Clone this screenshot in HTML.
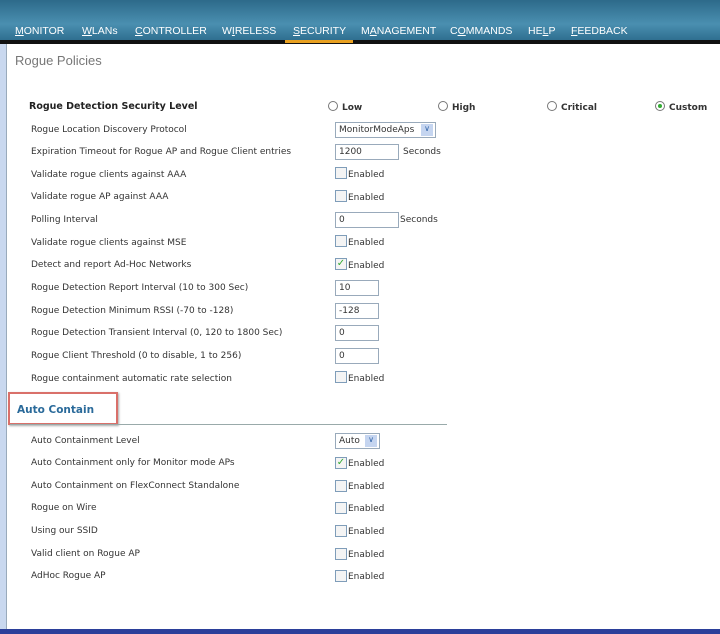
<!DOCTYPE html>
<html><head><meta charset="utf-8"><style>
*{margin:0;padding:0;box-sizing:border-box}
body{width:720px;height:634px;background:#fff;position:relative;overflow:hidden;font-family:"DejaVu Sans","Liberation Sans",sans-serif;font-size:9px;color:#333}
.nav{position:absolute;left:0;top:0;width:720px;height:40px;background:linear-gradient(#2d6a8a,#4a8fb0 60%,#2f6f90)}
.nav span{position:absolute;top:25px;color:#fff;font-family:"Liberation Sans",sans-serif;font-size:10.5px}
.nav u{text-decoration:underline}
.blk{position:absolute;left:0;top:40px;width:720px;height:4px;background:#111}
.sel{position:absolute;left:285px;top:40px;width:68px;height:3px;background:#e8a020}
.sb{position:absolute;left:0;top:44px;width:7px;height:585px;background:#c9d8ef;border-right:1px solid #9ab}
.bot{position:absolute;left:0;top:629px;width:720px;height:5px;background:#2b3f9a}
.t{position:absolute;white-space:nowrap}
.l{left:31px}
.cb{position:absolute;width:12px;height:12px;border:1px solid #7f9db9;background:#f4f4f4;left:335px}
.in{position:absolute;left:335px;height:16px;border:1px solid #9ab;background:#fff;padding:2px 3px;font-size:9px}
.rad{display:inline-block;width:10px;height:10px;border:1px solid #777;border-radius:50%;vertical-align:-1px;margin-right:4px;background:#fff;position:relative}
</style></head><body>
<div class="nav">
<span style="left:15px"><u>M</u>ONITOR</span>
<span style="left:82px"><u>W</u>LANs</span>
<span style="left:135px"><u>C</u>ONTROLLER</span>
<span style="left:222px">W<u>I</u>RELESS</span>
<span style="left:293px"><u>S</u>ECURITY</span>
<span style="left:361px">M<u>A</u>NAGEMENT</span>
<span style="left:450px">C<u>O</u>MMANDS</span>
<span style="left:528px">HE<u>L</u>P</span>
<span style="left:571px"><u>F</u>EEDBACK</span>
</div>
<div class="blk"></div><div class="sel"></div>
<div class="sb"></div>
<div class="t" style="left:15px;top:53px;font-family:'Liberation Sans',sans-serif;font-size:13px;color:#777">Rogue Policies</div>
<div class="t" style="left:29px;top:101px;font-weight:bold;font-size:9.5px;color:#222">Rogue Detection Security Level</div>
<div class="t" style="left:328px;top:101px;font-weight:bold"><span class="rad"></span>Low</div>
<div class="t" style="left:438px;top:101px;font-weight:bold"><span class="rad"></span>High</div>
<div class="t" style="left:547px;top:101px;font-weight:bold"><span class="rad"></span>Critical</div>
<div class="t" style="left:655px;top:101px;font-weight:bold"><span class="rad"><span style="position:absolute;left:2px;top:2px;width:4px;height:4px;border-radius:50%;background:#3a3"></span></span>Custom</div>

<div class="t l" style="top:125px">Rogue Location Discovery Protocol</div>
<div class="in" style="top:122px;width:101px">MonitorModeAps <span style="position:absolute;right:2px;top:1px;width:12px;height:12px;background:#c5d5f0;color:#36a;font-size:8px;text-align:center">&#8744;</span></div>
<div class="t l" style="top:147px">Expiration Timeout for Rogue AP and Rogue Client entries</div>
<div class="in" style="top:144px;width:64px">1200</div><div class="t" style="left:403px;top:147px">Seconds</div>
<div class="t l" style="top:170px">Validate rogue clients against AAA</div><div class="cb" style="top:167px"></div><div class="t" style="left:348px;top:170px">Enabled</div>
<div class="t l" style="top:192px">Validate rogue AP against AAA</div><div class="cb" style="top:190px"></div><div class="t" style="left:348px;top:193px">Enabled</div>
<div class="t l" style="top:215px">Polling Interval</div>
<div class="in" style="top:212px;width:64px">0</div><div class="t" style="left:400px;top:215px">Seconds</div>
<div class="t l" style="top:238px">Validate rogue clients against MSE</div><div class="cb" style="top:235px"></div><div class="t" style="left:348px;top:238px">Enabled</div>
<div class="t l" style="top:260px">Detect and report Ad-Hoc Networks</div><div class="cb" style="top:258px;color:#3a3;font-size:10px;line-height:10px;text-align:center">&#10003;</div><div class="t" style="left:348px;top:261px">Enabled</div>
<div class="t l" style="top:283px">Rogue Detection Report Interval (10 to 300 Sec)</div><div class="in" style="top:280px;width:44px">10</div>
<div class="t l" style="top:306px">Rogue Detection Minimum RSSI (-70 to -128)</div><div class="in" style="top:303px;width:44px">-128</div>
<div class="t l" style="top:328px">Rogue Detection Transient Interval (0, 120 to 1800 Sec)</div><div class="in" style="top:325px;width:44px">0</div>
<div class="t l" style="top:351px">Rogue Client Threshold (0 to disable, 1 to 256)</div><div class="in" style="top:348px;width:44px">0</div>
<div class="t l" style="top:374px">Rogue containment automatic rate selection</div><div class="cb" style="top:371px"></div><div class="t" style="left:348px;top:374px">Enabled</div>

<div style="position:absolute;left:8px;top:392px;width:110px;height:33px;border:2px solid #d9706a;box-shadow:1px 1px 2px #aaa"></div>
<div class="t" style="left:17px;top:404px;font-weight:bold;font-size:10.5px;color:#2a6a9a">Auto Contain</div>
<div style="position:absolute;left:10px;top:424px;width:437px;height:1px;background:#9aa"></div>

<div class="t l" style="top:436px">Auto Containment Level</div>
<div class="in" style="top:433px;width:45px">Auto <span style="position:absolute;right:2px;top:1px;width:12px;height:12px;background:#c5d5f0;color:#36a;font-size:8px;text-align:center">&#8744;</span></div>
<div class="t l" style="top:458px">Auto Containment only for Monitor mode APs</div><div class="cb" style="top:457px;color:#3a3;font-size:10px;line-height:10px;text-align:center">&#10003;</div><div class="t" style="left:348px;top:459px">Enabled</div>
<div class="t l" style="top:481px">Auto Containment on FlexConnect Standalone</div><div class="cb" style="top:480px"></div><div class="t" style="left:348px;top:482px">Enabled</div>
<div class="t l" style="top:503px">Rogue on Wire</div><div class="cb" style="top:502px"></div><div class="t" style="left:348px;top:504px">Enabled</div>
<div class="t l" style="top:526px">Using our SSID</div><div class="cb" style="top:525px"></div><div class="t" style="left:348px;top:527px">Enabled</div>
<div class="t l" style="top:549px">Valid client on Rogue AP</div><div class="cb" style="top:548px"></div><div class="t" style="left:348px;top:550px">Enabled</div>
<div class="t l" style="top:571px">AdHoc Rogue AP</div><div class="cb" style="top:570px"></div><div class="t" style="left:348px;top:572px">Enabled</div>
<div class="bot"></div>
</body></html>
